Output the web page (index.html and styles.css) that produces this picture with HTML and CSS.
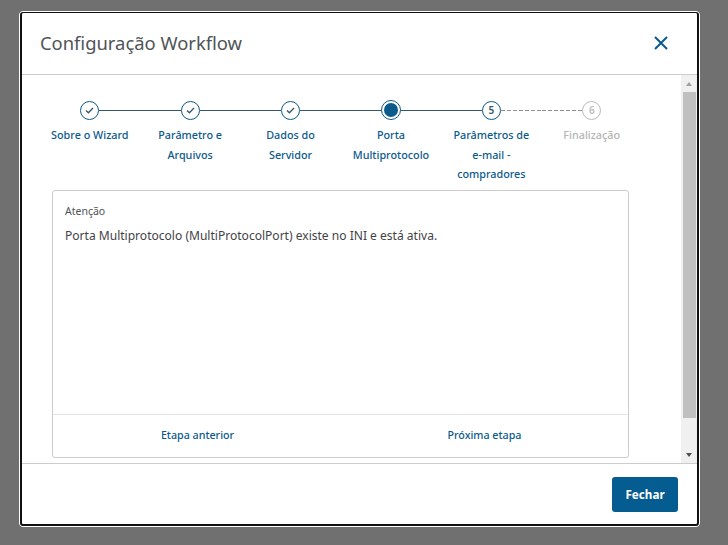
FILE: index.html
```html
<!DOCTYPE html>
<html lang="pt">
<head>
<meta charset="utf-8">
<title>Configuração Workflow</title>
<link rel="stylesheet" href="styles.css">
</head>
<body>
<div class="modal">
  <header class="modal-header">
    <h1 class="modal-title">Configuração Workflow</h1>
    <svg class="close" width="16" height="16" viewBox="0 0 16 16"><path d="M2 2 L14 14 M14 2 L2 14" fill="none" stroke="#0b5a8c" stroke-width="2"/></svg>
  </header>
  <div class="modal-body">
    <div class="content">
      <ol class="stepper">
        <li class="step done">
          <div class="head"><span class="line none"></span><span class="dot"><svg width="9" height="7" viewBox="0 0 9 7"><path d="M1 3.5 L3.4 5.8 L8 1" fill="none" stroke="#35576b" stroke-width="1.3"/></svg></span><span class="line"></span></div>
          <span class="label">Sobre o Wizard</span>
        </li>
        <li class="step done">
          <div class="head"><span class="line"></span><span class="dot"><svg width="9" height="7" viewBox="0 0 9 7"><path d="M1 3.5 L3.4 5.8 L8 1" fill="none" stroke="#35576b" stroke-width="1.3"/></svg></span><span class="line"></span></div>
          <span class="label">Parâmetro e Arquivos</span>
        </li>
        <li class="step done">
          <div class="head"><span class="line"></span><span class="dot"><svg width="9" height="7" viewBox="0 0 9 7"><path d="M1 3.5 L3.4 5.8 L8 1" fill="none" stroke="#35576b" stroke-width="1.3"/></svg></span><span class="line"></span></div>
          <span class="label">Dados do Servidor</span>
        </li>
        <li class="step">
          <div class="head"><span class="line"></span><span class="dot active"><span class="core"></span></span><span class="line"></span></div>
          <span class="label">Porta Multiprotocolo</span>
        </li>
        <li class="step">
          <div class="head"><span class="line"></span><span class="dot">5</span><span class="line dashed"></span></div>
          <span class="label">Parâmetros de e&#8209;mail - compradores</span>
        </li>
        <li class="step off">
          <div class="head"><span class="line dashed"></span><span class="dot">6</span><span class="line none"></span></div>
          <span class="label">Finalização</span>
        </li>
      </ol>
      <section class="card">
        <div class="card-main">
          <h2 class="card-title">Atenção</h2>
          <p class="card-text">Porta Multiprotocolo (MultiProtocolPort) existe no INI e está ativa.</p>
        </div>
        <div class="card-actions">
          <a class="action">Etapa anterior</a>
          <a class="action">Próxima etapa</a>
        </div>
      </section>
    </div>
    <div class="scrollbar">
      <span class="arrow up"></span>
      <div class="track"><div class="thumb"></div></div>
      <span class="arrow down"></span>
    </div>
  </div>
  <footer class="modal-footer">
    <button class="btn" type="button">Fechar</button>
  </footer>
</div>
</body>
</html>
```
FILE: styles.css
```css
* { box-sizing: border-box; }
html, body { margin: 0; height: 100%; }
body {
  background: #707070;
  font-family: "Noto Sans", "Open Sans", sans-serif;
  padding: 11px 0 0 19px;
  overflow: hidden;
}
.modal {
  width: 681px;
  height: 516px;
  background: #fff;
  border: 1px solid #fff;
  border-radius: 4px;
  display: flex;
  flex-direction: column;
  position: relative;
  padding: 1px 2px 2px 2px;
}
.modal::after {
  content: "";
  position: absolute;
  inset: 0;
  border: 2px solid #111;
  border-top-width: 1px;
  border-radius: 3px;
  pointer-events: none;
}
.modal-header {
  height: 62px;
  flex: none;
  border-bottom: 1px solid #ccc;
  display: flex;
  align-items: center;
  justify-content: space-between;
  padding: 0 28px 3px 18px;
}
.modal-title {
  margin: 0;
  font-size: 18.4px;
  font-weight: 400;
  color: #4f5458;
}
.close { margin-top: 2px; }
.modal-body {
  flex: none;
  height: 388px;
  display: flex;
}
.content {
  flex: 1;
  padding: 25px 0 0 17.6px;
}
.stepper {
  list-style: none;
  margin: 0;
  padding: 0;
  display: grid;
  grid-template-columns: repeat(6, 100.4px);
  height: 90px;
}
.step {
  display: flex;
  flex-direction: column;
  align-items: center;
  text-align: center;
}
.head {
  width: 100%;
  display: flex;
  align-items: center;
  height: 20px;
}
.line { flex: 1; height: 1px; background: #35576b; }
.line.none { background: transparent; }
.line.dashed {
  background: repeating-linear-gradient(90deg, #8f8f8f 0 4px, transparent 4px 6px);
}
.dot {
  flex: none;
  width: 19px;
  height: 19px;
  border: 1px solid #0b5a8c;
  border-radius: 50%;
  display: flex;
  align-items: center;
  justify-content: center;
  font-size: 10px;
  font-weight: 600;
  color: #35576b;
}
.dot.active {
  width: 20px;
  height: 20px;
  border-width: 1.5px;
}
.core {
  width: 14px;
  height: 14px;
  border-radius: 50%;
  background: #0b5a8c;
}
.label {
  width: 84px;
  margin-top: 5px;
  font-size: 10.8px;
  line-height: 19.5px;
  font-weight: 500;
  color: #0b5a8c;
}
.off .dot { border-color: #bbb; color: #bbb; }
.off .label { color: #b5b5b5; }
.card {
  width: 577px;
  height: 268px;
  margin-left: 12.4px;
  border: 1px solid #ccc;
  border-radius: 3px;
  display: flex;
  flex-direction: column;
}
.card-main {
  flex: 1;
  padding: 12px 12px 0;
}
.card-title {
  margin: 0;
  font-size: 10.5px;
  line-height: 16px;
  font-weight: 400;
  color: #4f5458;
}
.card-text {
  margin: 8px 0 0;
  font-size: 12.06px;
  line-height: 18px;
  color: #3f4347;
}
.card-actions {
  flex: none;
  height: 43px;
  border-top: 1px solid #e4e4e4;
  display: grid;
  grid-template-columns: 1fr 1fr;
  align-items: center;
  text-align: center;
  padding: 0 0 2px 1px;
}
.action {
  font-size: 10.7px;
  font-weight: 500;
  color: #0b5a8c;
}
.scrollbar {
  flex: none;
  width: 16px;
  background: #f0f0f0;
  display: flex;
  flex-direction: column;
  align-items: center;
  padding: 0 1px 0 1px;
}
.track { flex: 1; width: 100%; display: flex; flex-direction: column; }
.thumb { width: 13px; height: 326px; background: #c0c0c0; margin-left: 1px; }
.arrow { flex: none; height: 17px; display: flex; align-items: center; justify-content: center; }
.arrow::before {
  content: "";
  border-left: 3.5px solid transparent;
  border-right: 3.5px solid transparent;
}
.arrow.up::before { border-bottom: 4px solid #a0a0a0; }
.arrow.down::before { border-top: 4px solid #505050; }
.modal-footer {
  flex: 1;
  border-top: 1px solid #ccc;
  display: flex;
  align-items: flex-start;
  justify-content: flex-end;
  padding: 13px 19px 0 0;
}
.btn {
  width: 66px;
  height: 35px;
  border: 0;
  border-radius: 3px;
  background: #055c91;
  color: #fff;
  font-family: inherit;
  font-size: 11.7px;
  font-weight: 700;
  padding: 0 0 2px;
}
```
